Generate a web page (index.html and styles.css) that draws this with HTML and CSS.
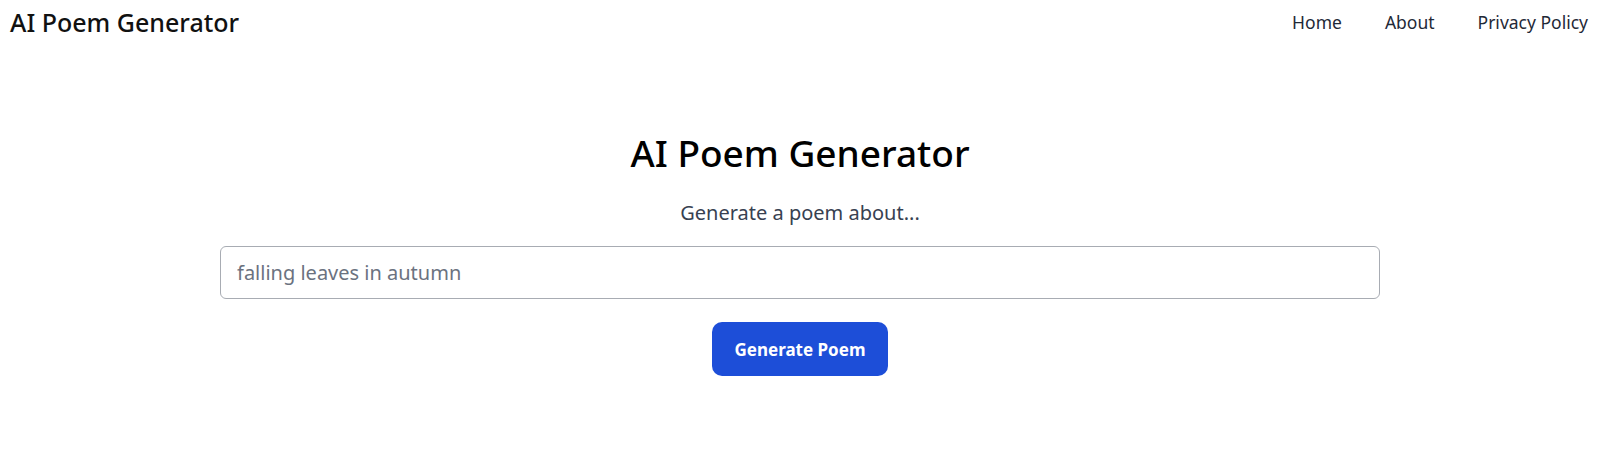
FILE: index.html
```html
<!DOCTYPE html>
<html lang="en">
<head>
<meta charset="utf-8">
<title>AI Poem Generator</title>
<link rel="stylesheet" href="styles.css">
</head>
<body>
<header class="topbar">
  <div class="brand">AI Poem Generator</div>
  <nav class="nav">
    <a href="#">Home</a>
    <a href="#">About</a>
    <a href="#">Privacy Policy</a>
  </nav>
</header>
<main class="main">
  <h1 class="title">AI Poem Generator</h1>
  <p class="subtitle">Generate a poem about...</p>
  <input class="prompt" type="text" placeholder="falling leaves in autumn">
  <button class="generate">Generate Poem</button>
</main>
</body>
</html>
```
FILE: styles.css
```css
* { box-sizing: border-box; }
html, body { margin: 0; padding: 0; background: #fff; }
body {
  font-family: "Noto Sans", "Open Sans", sans-serif;
  color: #000;
}
.topbar {
  display: flex;
  justify-content: space-between;
  align-items: center;
  height: 44px;
  padding: 0 12px 0 10px;
}
.brand {
  font-size: 25px;
  font-weight: 500;
  color: #111;
}
.nav {
  display: flex;
  gap: 43px;
}
.nav a {
  font-size: 17.5px;
  color: #1f2937;
  text-decoration: none;
}
.main {
  display: flex;
  flex-direction: column;
  align-items: center;
  padding-top: 82px;
}
.title {
  margin: 0;
  font-size: 37px;
  font-weight: 500;
  line-height: 54px;
}
.subtitle {
  margin: 19px 0 0;
  font-size: 20px;
  color: #374151;
  line-height: 28px;
}
.prompt {
  margin-top: 19px;
  width: 1160px;
  height: 53px;
  border: 1px solid #a8acb3;
  border-radius: 6px;
  padding: 0 16px;
  font-family: inherit;
  font-size: 20px;
  color: #111;
}
.prompt::placeholder { color: #6b7280; }
.generate {
  margin-top: 23px;
  width: 176px;
  height: 54px;
  border: none;
  border-radius: 10px;
  background: #1d4ed8;
  color: #fff;
  font-family: inherit;
  font-size: 17px;
  font-weight: 700;
}
```
